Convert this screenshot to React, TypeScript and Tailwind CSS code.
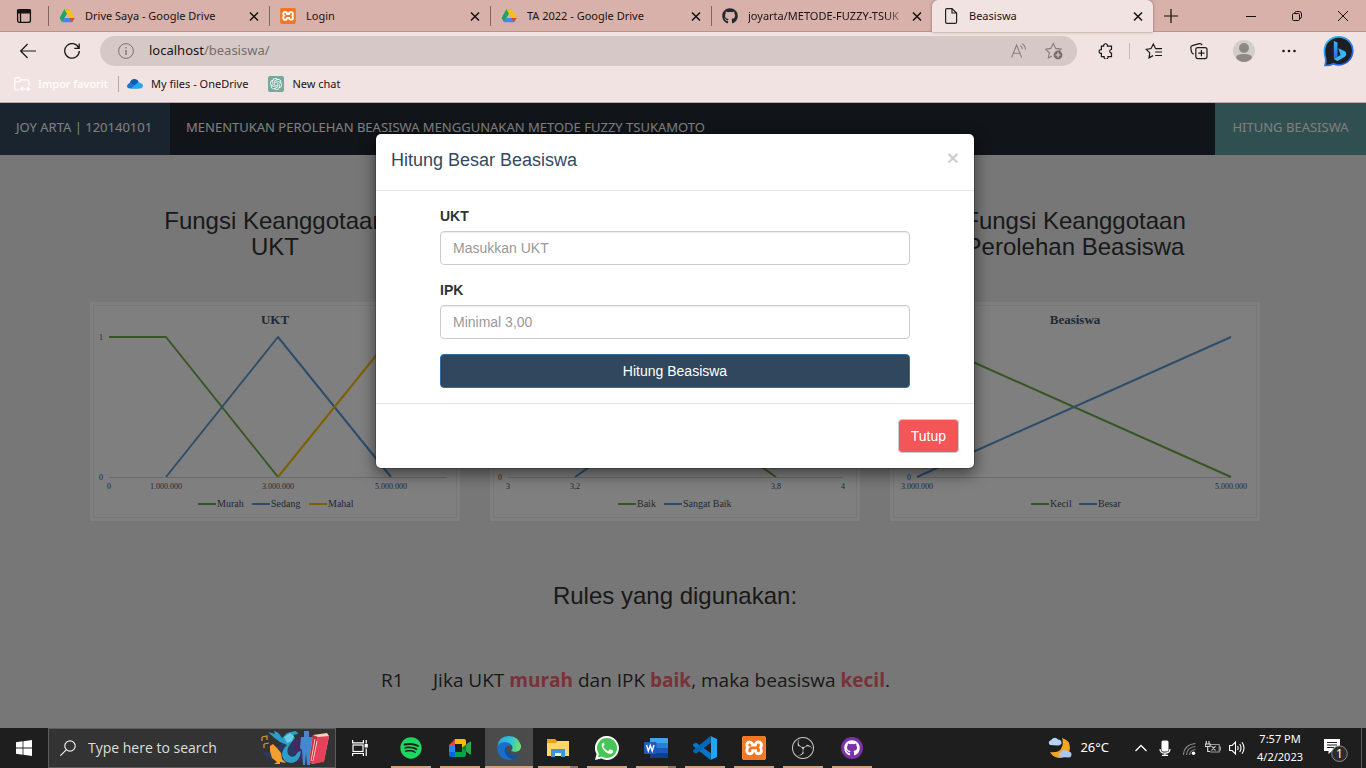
import React from "react";
import { FaGithub, FaSpotify } from "react-icons/fa";
import { SiObsstudio, SiOpenai, SiXampp } from "react-icons/si";

const UI_FONT = "font-['Noto_Sans','Open_Sans',sans-serif]";

function DriveIcon() {
  return (
    <svg viewBox="0 0 16 16" className="size-4" aria-hidden="true">
      <path d="M5.3 1.3h5.4L5.5 10.2 3 14.3.6 9.9z" fill="#1ea362" />
      <path d="M5.3 1.3h5.4l4.9 8.6h-5.2z" fill="#ffc107" />
      <path d="M5.3 9.9h10.3L13 14.3H3z" fill="#4285f4" />
      <path d="M10.4 9.9h5.2L13 14.3z" fill="#ea4335" />
      <path d="M8 5.8l2.4 4.1H5.6z" fill="#d8b1ab" />
    </svg>
  );
}

function XamppIcon({ className }: { className: string }) {
  return (
    <span className={`flex items-center justify-center rounded-[3px] bg-white text-[#f37623] ${className}`}>
      <SiXampp className="size-full" />
    </span>
  );
}

function CloseIcon() {
  return (
    <svg viewBox="0 0 16 16" className="size-4" fill="none" stroke="#111" strokeWidth="1.5" aria-hidden="true">
      <path d="M4 4.5l8 8M12 4.5l-8 8" />
    </svg>
  );
}

type TabProps = { icon: React.ReactNode; title: string; active?: boolean; fade?: boolean };

function BrowserTab({ icon, title, active, fade }: TabProps) {
  return (
    <div
      className={`flex w-[221px] shrink items-center border-l pr-[7px] pl-2.5 ${
        active
          ? "rounded-t-md border-transparent bg-[#f1e3e1] shadow-[0_0_3px_rgba(80,40,40,0.55)]"
          : "h-5 self-center border-[#7d6663]"
      }`}
    >
      <span className="flex size-4 items-center justify-center">{icon}</span>
      <span
        className={`ml-2.5 min-w-0 flex-1 whitespace-nowrap ${
          fade ? "[mask-image:linear-gradient(to_right,black_85%,transparent)]" : ""
        }`}
      >
        {title}
      </span>
      <button type="button" aria-label={`Tutup tab ${title}`} className="flex size-4 items-center justify-center">
        <CloseIcon />
      </button>
    </div>
  );
}

function TabStrip() {
  return (
    <div className="flex h-8 items-stretch bg-[#d8b1ab] text-[11px] text-[#1b1313] shadow-[inset_0_-1px_0_#b9958f]">
      <button type="button" aria-label="Menu tindakan tab" className="flex w-12 items-center justify-center">
        <svg viewBox="0 0 16 16" className="size-4" fill="none" stroke="#111" strokeWidth="1.3">
          <rect x="1.6" y="1.6" width="12.8" height="12.8" rx="2" />
          <path d="M1.6 2.2h12.8v2.6H1.6z" fill="#111" />
          <path d="M4.5 5v9.4" />
        </svg>
      </button>
      <BrowserTab icon={<DriveIcon />} title="Drive Saya - Google Drive" />
      <BrowserTab icon={<XamppIcon className="size-4" />} title="Login" />
      <BrowserTab icon={<DriveIcon />} title="TA 2022 - Google Drive" />
      <BrowserTab icon={<FaGithub className="size-4 text-[#24292f]" />} title="joyarta/METODE-FUZZY-TSUK" fade />
      <BrowserTab
        active
        title="Beasiswa"
        icon={
          <svg viewBox="0 0 16 16" className="size-4" fill="none" stroke="#222" strokeWidth="1.2">
            <path d="M2.6 2Q2.6.6 4 .6h5L13.6 5v9q0 1.4-1.4 1.4H4Q2.6 15.4 2.6 14zM9 .6V5h4.6" />
          </svg>
        }
      />
      <button type="button" aria-label="Tab baru" className="flex w-9 items-center justify-center">
        <svg viewBox="0 0 14 14" className="size-3.5" stroke="#111" strokeWidth="1.2">
          <path d="M7 0v14M0 7h14" />
        </svg>
      </button>
      <div className="flex flex-1 justify-end">
        <button type="button" aria-label="Perkecil" className="flex w-[46px] items-center justify-center">
          <svg viewBox="0 0 10 10" className="size-2.5" stroke="#111">
            <path d="M0 5.5h10" />
          </svg>
        </button>
        <button type="button" aria-label="Pulihkan" className="flex w-[46px] items-center justify-center">
          <svg viewBox="0 0 10 10" className="size-2.5" fill="none" stroke="#111">
            <rect x=".5" y="2.5" width="7" height="7" rx="1.2" />
            <path d="M2.5 2.2Q2.8.5 4.4.5h2.8Q9.5.5 9.5 2.8v2.8Q9.5 7.2 7.9 7.6" />
          </svg>
        </button>
        <button type="button" aria-label="Tutup jendela" className="flex w-[46px] items-center justify-center">
          <svg viewBox="0 0 10 10" className="size-2.5" stroke="#111">
            <path d="M0 0l10 10M10 0L0 10" />
          </svg>
        </button>
      </div>
    </div>
  );
}

function ToolButton({ label, children }: { label: string; children: React.ReactNode }) {
  return (
    <button type="button" aria-label={label} className="flex h-[30px] w-[45px] items-center justify-center">
      {children}
    </button>
  );
}

function Toolbar() {
  return (
    <div className="flex h-[38px] items-center bg-[#f1e3e1]">
      <button type="button" aria-label="Kembali" className="flex w-11 items-center justify-center pl-3">
        <svg viewBox="0 0 16 16" className="size-4" fill="none" stroke="#1a1a1a" strokeWidth="1.2">
          <path d="M16 8H.8M7.6 1L.7 8l6.9 7" />
        </svg>
      </button>
      <button type="button" aria-label="Segarkan" className="mr-3 flex w-11 items-center justify-center pl-3">
        <svg viewBox="0 0 16 16" className="size-4" fill="none" stroke="#1a1a1a" strokeWidth="1.3">
          <path d="M14.8 5.2A7.3 7.3 0 1 0 15.3 8M15.2.4v4.9h-4.9" />
        </svg>
      </button>
      <div className="flex h-[30px] flex-1 items-center rounded-full bg-[#d6c8c6] pr-3.5 pl-[18px]">
        <svg viewBox="0 0 16 16" className="size-4" fill="none" stroke="#7a706f" aria-hidden="true">
          <circle cx="8" cy="8" r="7.4" />
          <path d="M8 7v5M8 4v1.4" strokeWidth="1.3" />
        </svg>
        <a href="#alamat" className="ml-[15px] flex-1 text-[13px] text-[#1a1414]">
          localhost<span className="text-[#766c6b]">/beasiswa/</span>
        </a>
        <button type="button" aria-label="Baca dengan lantang" className="mr-[18px]">
          <svg viewBox="0 0 16 16" className="size-4" fill="none" stroke="#8b8180" strokeWidth="1.1">
            <path d="M.6 14.5L5.6 2l5 12.5M2.4 10.2h6.4M9.3 2.6q2 1.2 1.9 3.4M11.2.8q3.2 1.8 3.2 5.8" />
          </svg>
        </button>
        <button type="button" aria-label="Tambahkan ke favorit">
          <svg viewBox="0 0 18 18" className="size-[18px]" fill="none" stroke="#857b7a" strokeWidth="1.1">
            <path d="M7 14l-3.6 2 .9-5.2L.7 7.2l5.1-.8L8.3 1.5l2.4 4.9 5.4.8-2 2" />
            <circle cx="13" cy="13" r="4.4" fill="#766d6c" stroke="none" />
            <path d="M13 10.6v4.8M10.6 13h4.8" stroke="#e4d8d6" />
          </svg>
        </button>
      </div>
      <div className="ml-1.5 flex items-center">
        <ToolButton label="Ekstensi">
          <svg viewBox="0 0 16 16" className="size-4" fill="none" stroke="#1a1a1a" strokeWidth="1.2">
            <path d="M3.4 3.2h2.2a2 2 0 1 1 3.9 0h4v3.3a1.7 1.7 0 1 0 0 3.6v3.6H10a2 2 0 1 1-3.9 0H3.4v-3.4a1.9 1.9 0 1 1 0-3.7z" />
          </svg>
        </ToolButton>
        <span className="mx-px h-4 w-px bg-[#c5b8b6]" />
        <ToolButton label="Favorit">
          <svg viewBox="0 0 18 18" className="size-[18px]" fill="none" stroke="#1a1a1a" strokeWidth="1.2">
            <path d="M8 13.6l-4 2.2.8-4.9L1.2 7.3l4.9-.8L8.3 2l2.1 4.2M10.2 6.6H17M10.2 10H17M10.2 13.5H17" />
          </svg>
        </ToolButton>
        <ToolButton label="Koleksi">
          <svg viewBox="0 0 18 18" className="size-[18px]" fill="none" stroke="#1a1a1a" strokeWidth="1.2">
            <path d="M3.7 12.3Q1.8 11.3 1.4 9.6L.8 6q-.2-1.8 1.5-2.3l7-2q2-.5 2.8 1.5" />
            <rect x="5.8" y="5.6" width="11.2" height="11" rx="2" />
            <path d="M11.4 8v6.2M8.3 11.1h6.2" />
          </svg>
        </ToolButton>
        <ToolButton label="Profil">
          <svg viewBox="0 0 22 22" className="size-[22px]">
            <circle cx="11" cy="11" r="11" fill="#d0cdca" />
            <circle cx="11" cy="8" r="5" fill="#8d8884" />
            <path d="M3 18q0-4 8-4t8 4q-3.5 4-8 4t-8-4z" fill="#8d8884" />
          </svg>
        </ToolButton>
        <ToolButton label="Pengaturan dan lainnya">
          <svg viewBox="0 0 16 16" className="size-4" fill="#1a1a1a">
            <circle cx="2.5" cy="8" r="1.3" />
            <circle cx="8" cy="8" r="1.3" />
            <circle cx="13.5" cy="8" r="1.3" />
          </svg>
        </ToolButton>
        <button type="button" aria-label="Bing" className="flex w-[55px] items-center justify-center">
          <svg viewBox="0 0 32 32" className="size-8">
            <defs>
              <linearGradient id="bing-ring" x1="0" y1="0" x2=".6" y2="1">
                <stop offset="0" stopColor="#2cc5f4" />
                <stop offset="1" stopColor="#2558e8" />
              </linearGradient>
              <linearGradient id="bing-b" x1="0" y1="0" x2="0" y2="1">
                <stop offset="0" stopColor="#35b6f2" />
                <stop offset="1" stopColor="#2c62ef" />
              </linearGradient>
            </defs>
            <path
              d="M15.5 1.8a14 14 0 1 1 .5 28q-3 0-5.5-1.1-3.5 1.900-8.500 1.800 1.300-3.500.7-6.500Q1.500 20 1.500 16A14 14 0 0 1 15.500 1.800z"
              fill="#1e1f24"
              stroke="url(#bing-ring)"
              strokeWidth="1.7"
            />
            <path d="M10.8 6l3.7 1.4v14.200L10.800 24z" fill="url(#bing-b)" />
            <path d="M15.3 13.2l7 3.300q2.300 3.200-.8 5.600l-7 3.900-3.700-2 6.700-4.100z" fill="#35b8f4" />
          </svg>
        </button>
      </div>
    </div>
  );
}

function FavoritesBar() {
  return (
    <div className="flex h-[33px] items-center border-b border-[#b9acaa] bg-[#f1e3e1] pb-1 pl-3.5 text-[11px] text-[#1b1313]">
      <a href="#impor" className="flex items-center gap-2 font-medium text-white">
        <svg viewBox="0 0 16 16" className="size-4" fill="none" stroke="#fff" strokeWidth="1.2">
          <path d="M5.5 14H2.4Q.8 14 .8 12.4V3.200Q.8 1.600 2.400 1.600h3l2 2.200h6q1.600 0 1.600 1.600v4M.8 5.600h4.600l2-1.800M7 13h8.500M9 11l-2.200 2L9 15M13.500 11l2.200 2-2.200 2" />
        </svg>
        Impor favorit
      </a>
      <span className="mr-2 ml-2.5 h-4 w-px bg-[#b5a7a5]" />
      <a href="#onedrive" className="flex items-center gap-2">
        <svg viewBox="0 0 16 16" className="size-4">
          <path d="M2.4 8.200Q3.500 3 7.400 3q3 0 4.400 3.200L8 10z" fill="#0a5cb8" />
          <path d="M0 10.500Q.2 7 3.800 6.900l8.200 5.600H3Q.2 12.500 0 10.500z" fill="#1478d4" />
          <path d="M4 12.500l6-5.200q1.700-1.700 3.300-.4Q16 7.400 16 10q-.1 2.400-2.600 2.500z" fill="#28a8ea" />
        </svg>
        My files - OneDrive
      </a>
      <a href="#chat" className="ml-5 flex items-center gap-2">
        <span className="flex size-4 items-center justify-center rounded-[2px] bg-[#74aa9c] text-white">
          <SiOpenai className="size-3" />
        </span>
        New chat
      </a>
    </div>
  );
}

type Point = [number, number];
type Series = { name: string; color: string; points: Point[]; legendX: number };
type ChartProps = {
  title: string;
  series: Series[];
  ticks: { label: string; x: number }[];
  axis: [number, number];
  yLabelX: number;
};

function MembershipChart({ title, series, ticks, axis, yLabelX }: ChartProps) {
  return (
    <svg
      viewBox="0 0 370 219"
      role="img"
      aria-label={`Grafik ${title}`}
      className="block h-auto w-full bg-white font-['Liberation_Serif',serif]"
      fill="#44546a"
    >
      <rect x="3.5" y="3.5" width="363" height="212" fill="none" stroke="#f0f0f0" />
      <text x="185" y="22" textAnchor="middle" fontSize="13" fontWeight="700">
        {title}
      </text>
      <text x={yLabelX} y="38" textAnchor="middle" fontSize="8">1</text>
      <text x={yLabelX} y="178" textAnchor="middle" fontSize="8">0</text>
      <path d={`M${axis[0]} 175.5H${axis[1]}`} stroke="#d9d9d9" />
      {series.map((s) => (
        <g key={s.name}>
          <polyline
            points={s.points.map((p) => p.join(",")).join(" ")}
            fill="none"
            stroke={s.color}
            strokeWidth="2"
            strokeLinejoin="round"
          />
          <path d={`M${s.legendX} 202h18`} stroke={s.color} strokeWidth="2" />
          <text x={s.legendX + 19} y="205" fontSize="10">{s.name}</text>
        </g>
      ))}
      {ticks.map((t) => (
        <text key={t.label} x={t.x} y="187" textAnchor="middle" fontSize="8">{t.label}</text>
      ))}
    </svg>
  );
}

const GREEN = "#70ad47";
const BLUE = "#5b9bd5";
const YELLOW = "#ffc000";

const charts: { heading: [string, string]; chart: ChartProps }[] = [
  {
    heading: ["Fungsi Keanggotaan", "UKT"],
    chart: {
      title: "UKT",
      axis: [19, 357],
      yLabelX: 11,
      ticks: [
        { label: "0", x: 19 },
        { label: "1.000.000", x: 76 },
        { label: "3.000.000", x: 188 },
        { label: "5.000.000", x: 301 },
      ],
      series: [
        { name: "Murah", color: GREEN, points: [[19, 35], [76, 35], [188, 175]], legendX: 108 },
        { name: "Sedang", color: BLUE, points: [[76, 175], [188, 35], [301, 175]], legendX: 162 },
        { name: "Mahal", color: YELLOW, points: [[188, 175], [301, 35], [357, 35]], legendX: 219 },
      ],
    },
  },
  {
    heading: ["Fungsi Keanggotaan", "IPK"],
    chart: {
      title: "IPK",
      axis: [18, 353],
      yLabelX: 10,
      ticks: [
        { label: "3", x: 18 },
        { label: "3,2", x: 85 },
        { label: "3,8", x: 286 },
        { label: "4", x: 353 },
      ],
      series: [
        { name: "Baik", color: GREEN, points: [[18, 35], [85, 35], [286, 175]], legendX: 128 },
        { name: "Sangat Baik", color: BLUE, points: [[85, 175], [286, 35], [353, 35]], legendX: 174 },
      ],
    },
  },
  {
    heading: ["Fungsi Keanggotaan", "Perolehan Beasiswa"],
    chart: {
      title: "Beasiswa",
      axis: [27, 341],
      yLabelX: 19,
      ticks: [
        { label: "3.000.000", x: 27 },
        { label: "5.000.000", x: 341 },
      ],
      series: [
        { name: "Kecil", color: GREEN, points: [[27, 35], [341, 175]], legendX: 141 },
        { name: "Besar", color: BLUE, points: [[27, 175], [341, 35]], legendX: 189 },
      ],
    },
  },
];

function Term({ children }: { children: React.ReactNode }) {
  return <strong className="font-bold text-[#f26472]">{children}</strong>;
}

function ScholarshipPage() {
  return (
    <div className="min-h-full bg-[#eeeeee] text-[#333]">
      <nav className="flex h-[52px] bg-[#222930] text-[13px] leading-5 text-white">
        <a href="#home" className="min-w-[170px] bg-[#34495e] px-4 pt-3.5">JOY ARTA | 120140101</a>
        <a href="#judul" className="flex-1 px-4 pt-3.5">
          MENENTUKAN PEROLEHAN BEASISWA MENGGUNAKAN METODE FUZZY TSUKAMOTO
        </a>
        <a href="#hitung" className="min-w-[151px] bg-[#5f9ea0] px-4 pt-3.5 text-center">HITUNG BEASISWA</a>
      </nav>
      <main className="pr-4">
        <div className="mx-auto grid max-w-[1200px] grid-cols-3 pt-[53px]">
          {charts.map(({ heading, chart }) => (
            <section key={chart.title} className="px-[15px]">
              <h3 className="mb-[42px] text-center font-['Liberation_Sans',Arial,sans-serif] text-2xl leading-[26px]">
                {heading[0]}
                <br />
                {heading[1]}
              </h3>
              <MembershipChart {...chart} />
            </section>
          ))}
        </div>
        <h3 className="mt-[62px] text-center font-['Liberation_Sans',Arial,sans-serif] text-2xl leading-[26px]">
          Rules yang digunakan:
        </h3>
        <table className="mx-auto mt-14 w-full max-w-[600px] font-['Open_Sans','Noto_Sans',sans-serif] text-[19px] leading-[30px]">
          <tbody>
            <tr>
              <td className="w-[58px] pl-1.5">R1</td>
              <td>
                Jika UKT <Term>murah</Term> dan IPK <Term>baik</Term>, maka beasiswa <Term>kecil</Term>.
              </td>
            </tr>
          </tbody>
        </table>
      </main>
    </div>
  );
}

function Field({ id, label, placeholder }: { id: string; label: string; placeholder: string }) {
  return (
    <div className="mb-[15px]">
      <label htmlFor={id} className="mb-[5px] block leading-5 font-bold text-[#333]">{label}</label>
      <input
        id={id}
        placeholder={placeholder}
        className="block h-[34px] w-full rounded border border-[#ccc] bg-white px-3 shadow-[inset_0_1px_1px_rgba(0,0,0,0.075)] placeholder:text-[#999]"
      />
    </div>
  );
}

function ScholarshipDialog() {
  return (
    <div className="absolute inset-0 bg-black/50 pr-4">
      <div
        role="dialog"
        aria-labelledby="judul-dialog"
        className="mx-auto mt-[30px] max-w-[600px] rounded-md border border-black/20 bg-white bg-clip-padding font-['Liberation_Sans',Arial,sans-serif] text-sm shadow-[0_5px_15px_rgba(0,0,0,0.5)]"
      >
        <div className="flex items-start justify-between border-b border-[#e5e5e5] px-[15px] pt-[13px] pb-[17px]">
          <h4 id="judul-dialog" className="text-lg leading-[26px] text-[#34495e]">Hitung Besar Beasiswa</h4>
          <button type="button" aria-label="Tutup dialog" className="text-[21px] leading-none font-bold text-black/20">
            ×
          </button>
        </div>
        <form className="px-16 pt-[15px]">
          <Field id="ukt" label="UKT" placeholder="Masukkan UKT" />
          <Field id="ipk" label="IPK" placeholder="Minimal 3,00" />
          <button
            type="button"
            className="h-[34px] w-full rounded border border-[#2e6da4] bg-[#31475d] text-white"
          >
            Hitung Beasiswa
          </button>
        </form>
        <div className="mt-[15px] flex justify-end border-t border-[#e5e5e5] p-[15px]">
          <button type="button" className="h-[34px] rounded border border-[#ccc] bg-[#f25656] px-3 text-white">
            Tutup
          </button>
        </div>
      </div>
    </div>
  );
}

type AppProps = { label: string; active?: boolean; stacked?: boolean; children: React.ReactNode };

function TaskbarApp({ label, active, stacked, children }: AppProps) {
  return (
    <button
      type="button"
      aria-label={label}
      className={`flex w-12 flex-col items-center ${active ? "bg-[#4b4b4b]" : ""}`}
    >
      <span className="flex flex-1 items-center justify-center pt-0.5">{children}</span>
      <span className={`flex h-0.5 ${active ? "w-full" : "w-10"} bg-[#d0a284]`}>
        {stacked && <span className="ml-auto w-2 bg-[#957662]" />}
      </span>
    </button>
  );
}

function SearchArt() {
  return (
    <svg viewBox="0 0 72 38" className="h-[38px] w-[72px]" aria-hidden="true">
      <path d="M1 20q10 9 20-5l16-5 14 6q1 14-12 17H20Q7 30 1 20z" fill="#2b3860" />
      <path d="M34 13l9-6 6 6-2 17-9 3z" fill="#4a2560" />
      <path d="M3 8v4M3 8l5-1v4M5 15v4M5 15l5-1" stroke="#d99a3a" strokeWidth="1.2" fill="none" />
      <path d="M11 17l3-2 4 4 4 5 1 6 4 4-6-1v2h-6l3-2-5-4-2-7z" fill="#f5a02c" />
      <path d="M15 2q5 1 8 7l5-5 8-2q3 1 3 3l-5 1 2 3-4 5q-5 6-3 11 2 4 7 2l3-4 3-1-1 5q-3 7-9 7-8-1-9-8 0-5 5-10l-7-3q-6-4-12-10l7 2z" fill="#2a9fc8" />
      <path d="M25 8l6-4 4 3-2 5-5 2z" fill="#67cde0" />
      <path d="M45 2h5v6h3l2 12-3 2-1 14h-3l-1-12-1 12h-2l-1-15-2-2 1-11h3z" fill="#4389cf" />
      <path d="M54 6l14-2 2 3-5 25-12 3-3-3z" fill="#f2d5b5" />
      <path d="M59 8l11-1-5 26-12 2z" fill="#e5405c" />
      <path d="M54 6l5 2-6 27-3-3z" fill="#c92f48" />
      <path d="M56 10l-4 22M58 12l-4 20" stroke="#f0cdb0" />
    </svg>
  );
}

function Taskbar() {
  return (
    <footer className="flex h-10 items-stretch bg-[#1e1e1e] text-white">
      <button type="button" aria-label="Start" className="flex w-12 items-center justify-center">
        <svg viewBox="0 0 16 16" className="size-4" fill="#fff">
          <path d="M0 2.2L6.6 1.3v6.3H0zM7.4 1.2L16 0v7.6H7.4zM0 8.4h6.6v6.3L0 13.8zM7.4 8.4H16V16l-8.6-1.2z" />
        </svg>
      </button>
      <label className="flex w-72 items-center border border-[#5c5c5c] bg-[#333]">
        <svg viewBox="0 0 16 16" className="ml-[11px] size-4" fill="none" stroke="#eee" strokeWidth="1.2">
          <circle cx="10" cy="6" r="5.2" />
          <path d="M6.2 9.8L.3 15.7" />
        </svg>
        <input
          aria-label="Pencarian"
          placeholder="Type here to search"
          className="ml-3 min-w-0 flex-1 bg-transparent font-['Open_Sans','Noto_Sans',sans-serif] text-sm placeholder:text-[#dedede]"
        />
        <span className="mr-1">
          <SearchArt />
        </span>
      </label>
      <button type="button" aria-label="Task view" className="mr-[3px] flex w-12 items-center justify-center">
        <svg viewBox="0 0 16 16" className="size-4" fill="none" stroke="#fff" strokeWidth="1.2">
          <rect x="1" y="5" width="10" height="6.5" />
          <path d="M.6 0v2.8H11.4V0M.6 16v-2.5H11.4V16M14.2 0v3.5M14.2 8.5V16" />
          <path d="M13.2 4.5h2v2.4h-2z" fill="#fff" />
        </svg>
      </button>
      <div className="flex gap-px">
        <TaskbarApp label="Spotify">
          <FaSpotify className="size-[22px] text-[#1ed760]" />
        </TaskbarApp>
        <TaskbarApp label="Google Meet">
          <svg viewBox="0 0 24 20" className="h-5 w-6">
            <path d="M1 7l6-6v6z" fill="#ea4335" />
            <path d="M7 1h9q2 0 2 2v4l-4 3V6H7z" fill="#fbbc04" />
            <path d="M1 7h6v7H1z" fill="#2684fc" />
            <path d="M1 14h6v5H3q-2 0-2-2z" fill="#0066da" />
            <path d="M7 14h7v-4l4 3v4q0 2-2 2H7z" fill="#00a84a" />
            <path d="M7 6h7v8H7z" fill="#1e1e1e" />
            <path d="M14 10l7.5-6.3Q23 3 23 4.6v10.8q0 1.600-1.500.9z" fill="#2da94f" />
            <path d="M14 10l4-3.300v6.600z" fill="#00832d" />
          </svg>
        </TaskbarApp>
        <TaskbarApp label="Microsoft Edge" active>
          <svg viewBox="0 0 24 24" className="size-6">
            <defs>
              <linearGradient id="edge-top" x1="0" y1=".3" x2="1" y2=".5">
                <stop offset="0" stopColor="#2aa6e5" />
                <stop offset=".55" stopColor="#2fc4d0" />
                <stop offset="1" stopColor="#6be36a" />
              </linearGradient>
            </defs>
            <path d="M.2 11Q1.5.2 12 0q9.5.3 12 9.5.4 5.5-5 6.3-3.5.2-4.8-1.1Q16.5 12 14.8 9.500 12 6.500 7.500 7 3 7.600.2 11z" fill="url(#edge-top)" />
            <path d="M.1 12Q1.500 6 8 6q5.500.2 7 4.200-2-1.300-4.500-.4Q7 11.500 8 16q1.300 5 7.500 7.300Q12 24.600 8 23.300.3 20.500.1 12z" fill="#1a6fc9" />
            <path d="M9.300 11Q7 12.800 8 16.200q2.300 6.400 8 7 4-.8 6.500-5.300-4.500 2-8.500 0-5-2.300-4.700-6.900z" fill="#1351a0" />
          </svg>
        </TaskbarApp>
        <TaskbarApp label="File Explorer" stacked>
          <svg viewBox="0 0 22 20" className="h-5 w-[22px]">
            <path d="M0 1h8l2 2h12v15H0z" fill="#e8a317" />
            <path d="M0 5h9l1.500-2H22v15H0z" fill="#ffd766" />
            <path d="M4 19v-8h14v8h-4v-4H8v4z" fill="#3b96dd" />
            <path d="M8 18h6v-3H8z" fill="#fff1b8" />
          </svg>
        </TaskbarApp>
        <TaskbarApp label="WhatsApp">
          <svg viewBox="0 0 24 24" className="size-6">
            <path d="M12 0a12 12 0 1 1-5.7 22.6L0 24l1.600-6A12 12 0 0 1 12 0z" fill="#fff" />
            <path d="M12 2a10 10 0 1 1-5.200 18.500L2.900 21.400l1-3.600A10 10 0 0 1 12 2z" fill="#45c655" />
            <g transform="translate(2.5 2.5) scale(.8)">
              <path d="M8.500 5.500q-.5-.8-1.300-.5Q5 6 5.200 9q.8 4.500 5 7.800 4.300 2.900 7.200 2.200 2.500-1 2.300-3.300-.2-.7-3.700-2.200-.7-.2-1.200.5l-1.200 1.500q-.4.400-1 .1-3.700-1.700-5.300-5-.2-.5.200-.9l1-1.300q.3-.4.100-.9z" fill="#fff" />
            </g>
          </svg>
        </TaskbarApp>
        <TaskbarApp label="Word" stacked>
          <svg viewBox="0 0 24 22" className="h-[22px] w-6">
            <path d="M6 1h17q1 0 1 1v4H6z" fill="#41a5ee" />
            <path d="M6 6h18v5H6z" fill="#2b7cd3" />
            <path d="M6 11h18v5H6z" fill="#185abd" />
            <path d="M6 16h18v4q0 1-1 1H7q-1 0-1-1z" fill="#103f91" />
            <rect y="5" width="12.5" height="12" rx="1" fill="#1d5bbd" />
            <path d="M2.5 8l1.800 6L6.300 8.400 8.200 14 10 8" fill="none" stroke="#fff" strokeWidth="1.4" />
          </svg>
        </TaskbarApp>
        <TaskbarApp label="Visual Studio Code">
          <svg viewBox="0 0 24 24" className="size-6">
            <path d="M1.500 7.200L0 8.500l.1 1.500L17.500 24 18 17.200 3.200 6.800z" fill="#0079cc" />
            <path d="M17.500 0L18 6.800 3.200 17.400 1.500 17 0 15.600l.1-1.300z" fill="#0068b3" />
            <path d="M17.500 0L24 3v18l-6.500 3Q18.200 23 18 21.500v-19Q18.200 1 17.500 0z" fill="#22a6f1" />
          </svg>
        </TaskbarApp>
        <TaskbarApp label="XAMPP">
          <XamppIcon className="size-6" />
        </TaskbarApp>
        <TaskbarApp label="OBS Studio">
          <SiObsstudio className="size-[22px] text-[#c9c9c9]" />
        </TaskbarApp>
        <TaskbarApp label="GitHub Desktop">
          <span className="flex size-[22px] items-center justify-center rounded-full bg-[#7b32a8]">
            <FaGithub className="size-4 text-white" />
          </span>
        </TaskbarApp>
      </div>
      <div className="flex flex-1 items-center justify-end">
        <svg viewBox="0 0 24 22" className="h-[22px] w-6" aria-hidden="true">
          <path d="M14 1q8 2 8 10-.5 8-9 10-8 0-11-6 8 1 11-3 3-5 1-11z" fill="#f5a524" />
          <path d="M2 8q-3-3 1-5Q7-1 10 2.500q4 .5 3.500 4Q12 9 9.500 8.500z" fill="#b9d3f7" />
          <path d="M12 20q-3-3 1-4.500 2-4 6-1.500 5 .5 4.500 4Q23 20.500 21 20.500z" fill="#a9c8f3" />
        </svg>
        <span className="mr-6 ml-2 text-[13px]">26°C</span>
        <div className="flex items-center gap-2">
          <svg viewBox="0 0 16 16" className="size-4" fill="none" stroke="#fff" strokeWidth="1.3">
            <path d="M2.5 11L8 5.500l5.500 5.500" />
          </svg>
          <svg viewBox="0 0 16 16" className="size-4" fill="none" stroke="#fff" strokeWidth="1.2">
            <rect x="4.5" y=".5" width="7" height="11" rx="1.5" fill="#fff" stroke="none" />
            <path d="M3 9q0 4.200 5 4.200T13 9M8 13v2.400M5 15.400h6" />
          </svg>
          <svg viewBox="0 0 16 16" className="size-4" fill="none" stroke="#8a8a8a" strokeWidth="1.1">
            <path d="M2.5 15Q3 4.500 14.500 3.500M5.500 15Q6 7.300 14.500 6.500M8.500 15Q9 10.300 14.500 9.500" />
            <circle cx="12.5" cy="13.2" r="1.7" fill="#fff" stroke="none" />
          </svg>
          <svg viewBox="0 0 16 16" className="size-4" fill="none" stroke="#ddd" strokeWidth="1.1">
            <path d="M5 4.500h9.200v7.500H5M14.500 7h1v3h-1" stroke="#999" />
            <path d="M1.300 1v3M4 1v3M.3 4h4.800v2.500H.3zM2.700 6.500v5H5M6.500 6l4 4.500M10.500 6l-4 4.500" />
          </svg>
          <svg viewBox="0 0 16 16" className="size-4" fill="none" stroke="#fff" strokeWidth="1.1">
            <path d="M.6 5.500h2.500L6.500 2v12L3.100 10.500H.6zM8.500 6q1.300 2 0 4M10.700 4q2.600 4 0 8M13 2.300q4 5.700 0 11.400" />
          </svg>
        </div>
        <div className="ml-3 text-center text-[11px] leading-[18px]">
          7:57 PM
          <br />
          4/2/2023
        </div>
        <button type="button" aria-label="Notifikasi" className="mr-3 ml-5">
          <svg viewBox="0 0 26 28" className="h-7 w-[26px]">
            <path d="M1 5h16v12H9l-3.5 3v-3H1z" fill="#fff" />
            <path d="M4 8.500h10M4 11h10M4 13.500h7" stroke="#222" />
            <circle cx="16.5" cy="19.7" r="7.8" fill="#2c2c2c" stroke="#8b8b8b" />
            <text x="16.5" y="24.2" textAnchor="middle" fontSize="12" fill="#fff">1</text>
          </svg>
        </button>
        <span className="mr-1 h-full w-px bg-[#5a5a5a]" />
      </div>
    </footer>
  );
}

export default function App() {
  return (
    <div className={`flex h-screen flex-col overflow-hidden ${UI_FONT}`}>
      <header>
        <TabStrip />
        <Toolbar />
        <FavoritesBar />
      </header>
      <div className="relative min-h-0 flex-1 overflow-hidden">
        <ScholarshipPage />
        <ScholarshipDialog />
      </div>
      <Taskbar />
    </div>
  );
}
